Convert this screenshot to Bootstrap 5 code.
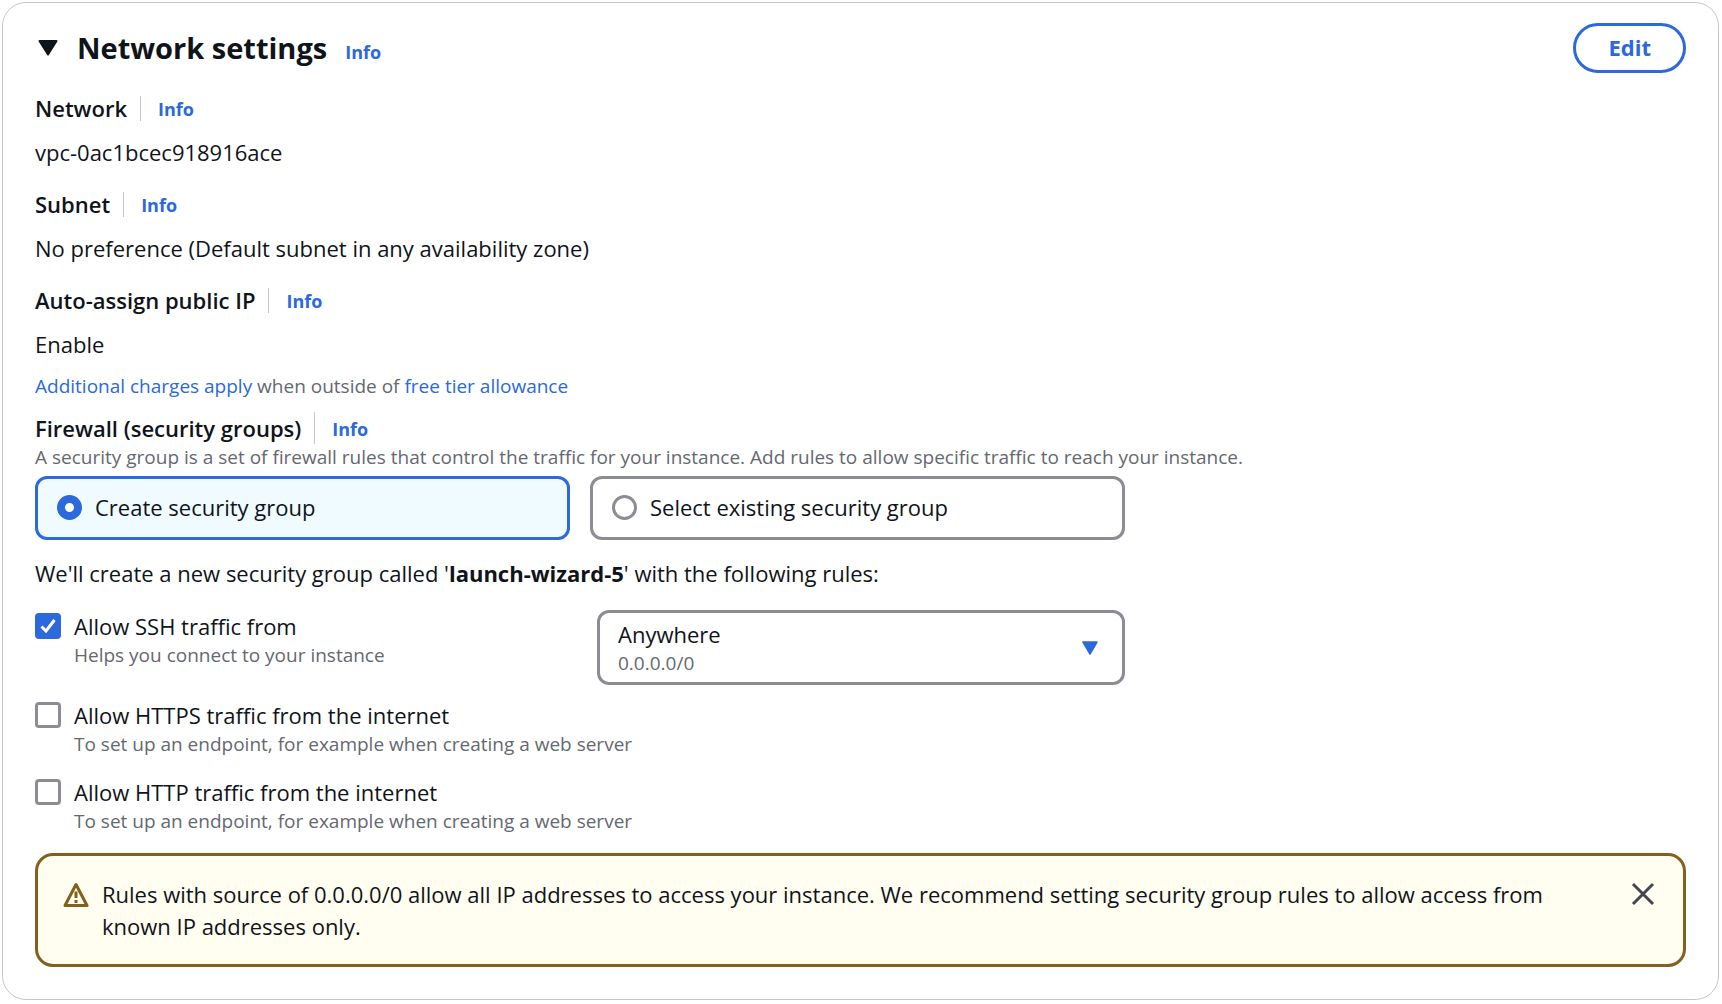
<!DOCTYPE html>
<html lang="en">
<head>
<meta charset="utf-8">
<meta name="viewport" content="width=device-width, initial-scale=1">
<title>Network settings</title>
<link href="https://cdn.jsdelivr.net/npm/bootstrap@5.3.0/dist/css/bootstrap.min.css" rel="stylesheet">
<style>
  :root { --ink: #0f141a; --muted: #656871; --link: #2b69dc; --edge: #8c8c94; --warn: #855f1c; }
  body { font-family: "Open Sans", "Noto Sans", sans-serif; font-size: 22px; line-height: 32px; color: var(--ink); background: #fff; }
  a { color: var(--link); text-decoration: none; }
  a:hover { text-decoration: underline; }
  .settings-panel { margin: 2px 3px 2px 2px; padding: 20px 32px 32px; border: 1px solid #c6c6cd; border-radius: 24px; }
  .panel-title { font-size: 29px; line-height: 50px; font-weight: 700; margin: 0; }
  .info-link { font-size: 18px; line-height: 24px; font-weight: 700; }
  .title-group { gap: 18px; }
  .title-toggle { border: 0; background: none; padding: 0; width: 26px; line-height: 0; text-align: center; margin-right: 16px; }
  .edit-btn { --bs-btn-color: var(--link); --bs-btn-border-color: var(--link); --bs-btn-hover-color: #fff; --bs-btn-hover-bg: var(--link); --bs-btn-font-size: 22px; --bs-btn-font-weight: 700; border-width: 3px; line-height: 28px; padding: 7px 32px 9px; }
  .fields { margin-top: 19px; }
  .field-label { font-weight: 600; line-height: 32px; padding-right: 13px; }
  .field-info { border-left: 1px solid #c6c6cd; padding-left: 17px; padding-top: 2px; line-height: 23px; }
  .field-block { margin-bottom: 20px; }
  .field-value { margin-top: 12px; line-height: 32px; }
  .hint { font-size: 19px; line-height: 26px; color: var(--muted); }
  .charges, .firewall { margin-top: 13px; }
  .tiles { max-width: 1090px; gap: 20px; margin-top: 6px; }
  .tile { border: 3px solid var(--edge); border-radius: 12px; padding: 12px 20px 14px 19px; gap: 13px; cursor: pointer; }
  .tile:has(:checked) { border-color: var(--link); background: #f0fbff; }
  .form-check-input.tile-radio { width: 25px; height: 25px; margin: 0; border: 3px solid var(--edge); }
  .form-check-input.tile-radio:checked { border: 8px solid var(--link); background: #fff; }
  .form-check-input.rule-box { width: 26px; height: 26px; margin: 3px 0 0; border: 3px solid var(--edge); border-radius: 4px; flex-shrink: 0; }
  .form-check-input.rule-box:checked { background-color: var(--link); border-color: var(--link); background-size: 20px; background-image: url("data:image/svg+xml,%3csvg xmlns='http://www.w3.org/2000/svg' viewBox='0 0 20 20'%3e%3cpath fill='none' stroke='%23fff' stroke-width='3' d='M3.500 10.500L8 15L16.500 4'/%3e%3c/svg%3e"); }
  .intro { margin: 17px 0 21px; }
  .rule { gap: 13px; }
  .rule label { display: block; line-height: 32px; }
  .rule-gap { margin-bottom: 19px; }
  .ssh-row { max-width: 1090px; margin-bottom: 14px; }
  .source-field { width: 528px; max-width: 100%; }
  .source-select { appearance: none; width: 100%; height: 75px; border: 3px solid var(--edge); border-radius: 12px; background: #fff; color: var(--ink); padding: 0 64px 28px 18px; }
  .source-range { left: 21px; bottom: 9px; pointer-events: none; }
  .source-arrow { right: 27px; top: 31px; pointer-events: none; }
  .notice { border: 3px solid var(--warn); border-radius: 18px; background: #fffef0; color: var(--ink); padding: 22px 28px 22px 25px; margin: 0; gap: 13px; }
  .notice-close { border: 0; background: none; padding: 0; line-height: 0; }
</style>
</head>
<body>
<main class="settings-panel">
  <header class="d-flex justify-content-between align-items-center">
    <div class="d-flex align-items-center">
      <button class="title-toggle" type="button" aria-label="Collapse network settings">
        <svg width="20" height="16" viewBox="0 0 20 16"><path d="M1.500 1H18.500L10 14.500Z" fill="#0f141a" stroke="#0f141a" stroke-width="2" stroke-linejoin="round"/></svg>
      </button>
      <div class="d-flex align-items-baseline title-group">
        <h1 class="panel-title">Network settings</h1>
        <a class="info-link" href="#">Info</a>
      </div>
    </div>
    <button type="button" class="btn rounded-pill edit-btn">Edit</button>
  </header>

  <section class="field-block fields">
    <div class="d-flex align-items-center"><span class="field-label">Network</span><a class="info-link field-info" href="#">Info</a></div>
    <div class="field-value">vpc-0ac1bcec918916ace</div>
  </section>
  <section class="field-block">
    <div class="d-flex align-items-center"><span class="field-label">Subnet</span><a class="info-link field-info" href="#">Info</a></div>
    <div class="field-value">No preference (Default subnet in any availability zone)</div>
  </section>
  <section>
    <div class="d-flex align-items-center"><span class="field-label">Auto-assign public IP</span><a class="info-link field-info" href="#">Info</a></div>
    <div class="field-value">Enable</div>
    <div class="hint charges"><a href="#">Additional charges apply</a> when outside of <a href="#">free tier allowance</a></div>
  </section>

  <section class="firewall">
    <div class="d-flex"><span class="field-label" id="firewall">Firewall (security groups)</span><a class="info-link field-info d-flex align-items-center" href="#">Info</a></div>
    <div class="hint">A security group is a set of firewall rules that control the traffic for your instance. Add rules to allow specific traffic to reach your instance.</div>
    <div class="row row-cols-2 g-0 flex-nowrap tiles" role="radiogroup" aria-labelledby="firewall">
      <label class="col flex-fill d-flex align-items-center tile"><input class="form-check-input tile-radio" type="radio" name="group" checked>Create security group</label>
      <label class="col flex-fill d-flex align-items-center tile"><input class="form-check-input tile-radio" type="radio" name="group">Select existing security group</label>
    </div>
  </section>

  <p class="intro">We'll create a new security group called '<strong>launch-wizard-5</strong>' with the following rules:</p>

  <section>
    <div class="d-flex justify-content-between ssh-row">
      <div class="d-flex rule">
        <input class="form-check-input rule-box" type="checkbox" id="ssh" checked>
        <div><label for="ssh">Allow SSH traffic from</label><div class="hint">Helps you connect to your instance</div></div>
      </div>
      <div class="position-relative source-field">
        <select class="source-select" aria-label="SSH source"><option>Anywhere</option><option>Custom</option><option>My IP</option></select>
        <div class="position-absolute hint source-range">0.0.0.0/0</div>
        <svg class="position-absolute source-arrow" width="16" height="14" viewBox="0 0 16 14"><path d="M1 1H15L8 13Z" fill="#2b69dc" stroke="#2b69dc" stroke-width="1.500" stroke-linejoin="round"/></svg>
      </div>
    </div>
    <div class="d-flex rule rule-gap">
      <input class="form-check-input rule-box" type="checkbox" id="https">
      <div><label for="https">Allow HTTPS traffic from the internet</label><div class="hint">To set up an endpoint, for example when creating a web server</div></div>
    </div>
    <div class="d-flex rule rule-gap">
      <input class="form-check-input rule-box" type="checkbox" id="http">
      <div><label for="http">Allow HTTP traffic from the internet</label><div class="hint">To set up an endpoint, for example when creating a web server</div></div>
    </div>
  </section>

  <div class="alert notice d-flex align-items-start" role="alert">
    <svg class="flex-shrink-0 mt-1" width="26" height="26" viewBox="0 0 26 26" fill="none" stroke="#855f1c"><path d="M13 2.500L24 23.500H2Z" stroke-width="3" stroke-linejoin="round"/><path d="M13 9.500V16M13 18V21" stroke-width="3"/></svg>
    <div class="flex-fill me-5 pe-4">Rules with source of 0.0.0.0/0 allow all IP addresses to access your instance. We recommend setting security group rules to allow access from known IP addresses only.</div>
    <button class="notice-close mt-1" type="button" aria-label="Dismiss"><svg width="24" height="24" viewBox="0 0 24 24" stroke="#424650" stroke-width="3"><path d="M2 2L22 22M22 2L2 22"/></svg></button>
  </div>
</main>
<script src="https://cdn.jsdelivr.net/npm/bootstrap@5.3.0/dist/js/bootstrap.bundle.min.js"></script>
</body>
</html>
